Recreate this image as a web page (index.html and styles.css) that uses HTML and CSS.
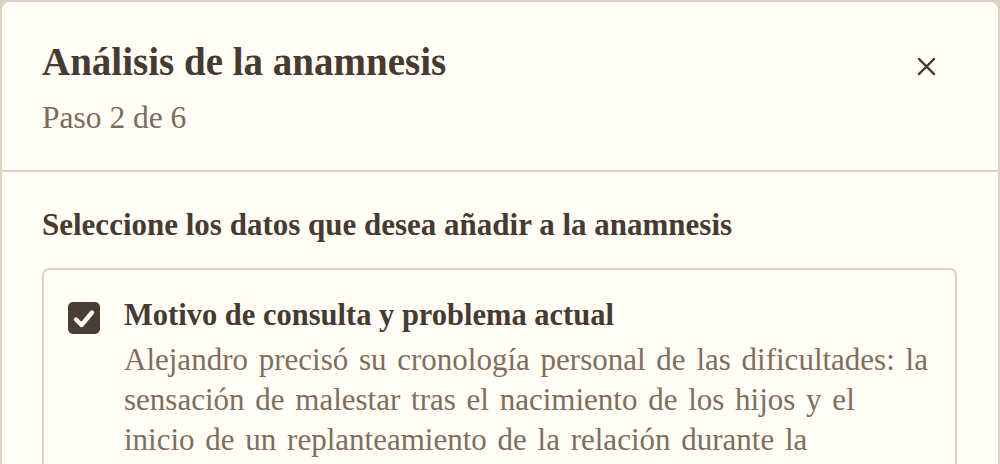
FILE: index.html
```html
<!DOCTYPE html>
<html lang="es">
<head>
<meta charset="utf-8">
<title>Análisis de la anamnesis</title>
<link rel="stylesheet" href="styles.css">
</head>
<body>
<div class="dialog" role="dialog" aria-labelledby="dlg-title">
  <header class="dialog-header">
    <div class="titles">
      <h1 id="dlg-title" class="title">Análisis de la anamnesis</h1>
      <p class="step">Paso 2 de 6</p>
    </div>
    <button class="close" type="button" aria-label="Cerrar">
      <svg viewBox="0 0 20 20" width="20" height="20" aria-hidden="true">
        <path d="M2 2 L18 18 M18 2 L2 18" fill="none" stroke="#463a31" stroke-width="2.4" stroke-linecap="round"/>
      </svg>
    </button>
  </header>
  <div class="dialog-body">
    <p class="prompt">Seleccione los datos que desea añadir a la anamnesis</p>
    <label class="option">
      <input type="checkbox" class="native" checked>
      <span class="check" aria-hidden="true">
        <svg viewBox="0 0 32 32" width="32" height="32">
          <rect x="0" y="0" width="32" height="32" rx="5" fill="#4a3d33"/>
          <path d="M8 17.5 L13.5 23 L24 10.5" fill="none" stroke="#ffffff" stroke-width="4.4" stroke-linecap="round" stroke-linejoin="round"/>
        </svg>
      </span>
      <span class="option-text">
        <span class="option-title">Motivo de consulta y problema actual</span>
        <span class="option-desc">Alejandro precisó su cronología personal de las dificultades: la sensación de malestar tras el nacimiento de los hijos y el inicio de un replanteamiento de la relación durante la pandemia, con un aumento progresivo de los conflictos.</span>
      </span>
    </label>
  </div>
</div>
</body>
</html>
```

FILE: styles.css
```css
* {
  box-sizing: border-box;
}

html, body {
  margin: 0;
  padding: 0;
}

body {
  background: #d9d1c1;
  font-family: "Liberation Serif", "Times New Roman", serif;
  color: #463a31;
  overflow: hidden;
}

.dialog {
  width: 1000px;
  min-height: 600px;
  background: #fffdf6;
  border: 2px solid #ddd3c0;
  border-radius: 10px;
}

.dialog-header {
  display: flex;
  justify-content: space-between;
  align-items: flex-start;
  padding: 36px 40px 32px 40px;
  border-bottom: 2px solid #ddd3c0;
}

.title {
  margin: 0;
  font-size: 39px;
  line-height: 48px;
  font-weight: 700;
  color: #463a31;
}

.step {
  margin: 12px 0 0 0;
  font-size: 31.5px;
  line-height: 40px;
  color: #7a6b5a;
}

.close {
  width: 40px;
  height: 40px;
  margin: 8px 12px 0 0;
  padding: 0;
  border: 0;
  background: transparent;
  display: flex;
  align-items: center;
  justify-content: center;
  cursor: pointer;
}

.close svg {
  width: 19px;
  height: 19px;
}

.dialog-body {
  padding: 33px 41px 40px 40px;
}

.prompt {
  margin: 0;
  font-size: 31px;
  line-height: 40px;
  font-weight: 700;
  color: #463a31;
}

.option {
  display: flex;
  gap: 24px;
  margin-top: 23px;
  padding: 25px 23px 22px 24px;
  border: 2px solid #ddd3c0;
  border-radius: 7px;
  cursor: pointer;
}

.native {
  position: absolute;
  opacity: 0;
  width: 0;
  height: 0;
  margin: 0;
}

.check {
  flex: 0 0 32px;
  width: 32px;
  height: 32px;
  margin-top: 7px;
  display: block;
}

.check svg {
  display: block;
}

.option-text {
  display: flex;
  flex-direction: column;
  flex: 1 1 auto;
  min-width: 0;
}

.option-title {
  font-size: 30.5px;
  line-height: 40px;
  font-weight: 700;
  color: #463a31;
}

.option-desc {
  margin-top: 5px;
  font-size: 31px;
  line-height: 40px;
  word-spacing: 3px;
  color: #7f6e5b;
}
```
